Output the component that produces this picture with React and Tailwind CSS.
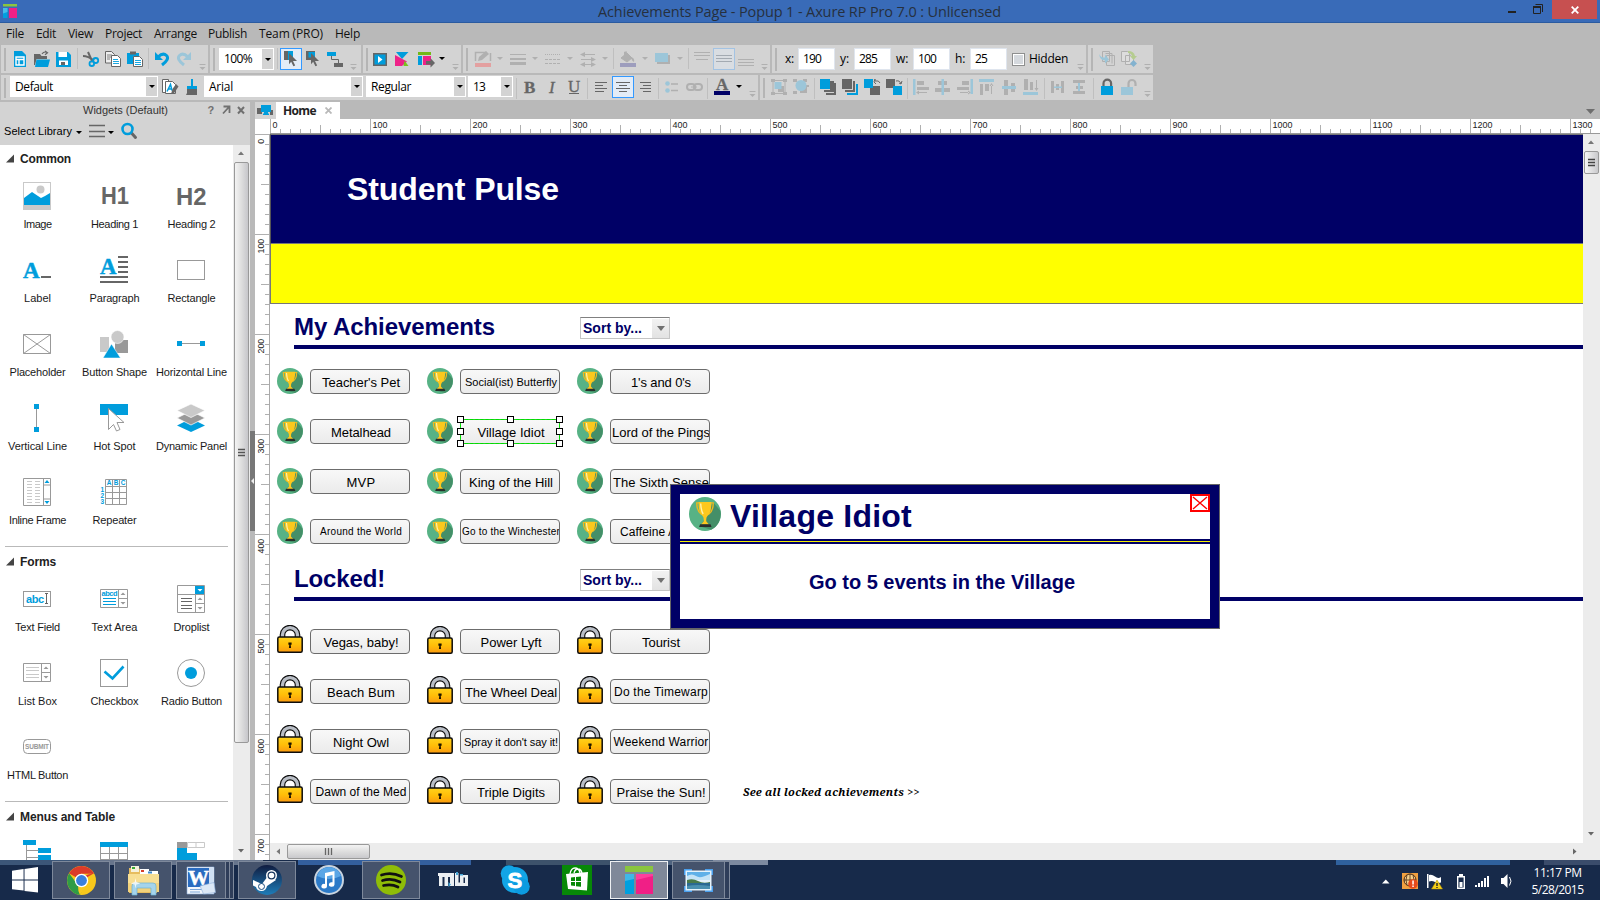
import React, { useLayoutEffect, useRef } from "react";

const BLUE = "#009ddc";
const GRAY = "#666666";
const FBLUE = "#9cc6d9";
const FGRAY = "#b0b0b0";

/* Text whose tracking is adjusted so that it spans a given width. */
function Fit({ w, className = "", children }) {
  const ref = useRef(null);
  useLayoutEffect(() => {
    const el = ref.current;
    el.style.letterSpacing = "0px";
    const width = el.getBoundingClientRect().width;
    el.style.letterSpacing = (w - width) / Math.max(1, el.textContent.length) + "px";
  }, [w]);
  return (
    <span ref={ref} className={"inline-block whitespace-pre " + className}>
      {children}
    </span>
  );
}

/* ---------- toolbars ---------- */
function Strip({ x, w, row, children }) {
  const y = row === 1 ? 45 : 75;
  const h = row === 1 ? 28 : 25;
  return (
    <svg className="block shrink-0" width={w} height={h} viewBox={`${x} ${y} ${w} ${h}`}>
      {children}
    </svg>
  );
}
const Grip = ({ x, row }) => <rect x={x} y={row === 1 ? 48 : 78} width="2" height={row === 1 ? 23 : 20} fill="#b5b5b5" />;
const Sep = ({ x, row }) => <rect x={x} y={row === 1 ? 48 : 78} width="1" height="21" fill="#bfbfbf" />;
const Over = ({ x, row }) => {
  const y = row === 1 ? 64 : 91;
  return (
    <g fill="#b0b0b0">
      <rect x={x} y={y} width="6" height="1" />
      <path d={`M${x} ${y + 3}h6l-3 3z`} />
    </g>
  );
};
const Drop = ({ x, y, c = "#000" }) => <path d={`M${x} ${y}h6l-3 3z`} fill={c} />;
const Sel = ({ x, y, w = 21, faded }) => (
  <rect x={x + 0.5} y={y + 0.5} width={w} height="21" fill={faded ? "#d9dde2" : "#e3ecf7"} stroke={faded ? "#a3c3e3" : "#3399ff"} />
);
const Cursor = ({ x, y }) => <path d={`M${x} ${y}l8 8h-4l2.2 4.4-1.8.9-2.2-4.5-2.2 2.4z`} fill={GRAY} />;
const Field = ({ className, w, children }) => (
  <div className={"flex shrink-0 items-center border border-[#dfe5ee] bg-white text-[12px] leading-none text-black " + className}>
    <Fit w={w}>{children}</Fit>
  </div>
);
const Combo = ({ className, w, children }) => (
  <div className={"flex shrink-0 items-stretch justify-between bg-white " + className}>
    <div className="flex items-center text-[12px] leading-none text-black">
      <Fit w={w}>{children}</Fit>
    </div>
    <div className="my-px mr-px flex w-[11px] items-center justify-center bg-[#d3d3d3]">
      <svg width="6" height="3" viewBox="0 0 6 3"><path d="M0 0h6l-3 3z" /></svg>
    </div>
  </div>
);

function ToolbarRow1() {
  return (
    <div className="flex h-[28px] gap-[2px] pl-px">
      <div className="flex bg-[#d3d3d3]">
        <Strip x={1} w={207} row={1}>
          <Grip x={4} row={1} />
          <path d="M14 51h8l4 4v12h-12z" fill={BLUE} />
          <path d="M16 57h8v8h-8zM16 59.5h8M19 59.5v5.5" fill="none" stroke="#fff" strokeWidth="1.4" />
          <path d="M34 54h6l1.5 2H47v3H36.500l-1.500 6H34z" fill={GRAY} />
          <path d="M36.500 59.500H50L48 67H35z" fill={BLUE} />
          <path d="M42 54q2-3 5-1.500M45 51l2.500 1.800-2.500 2" fill="none" stroke={GRAY} strokeWidth="1.200" />
          <path d="M56 52h12l3 3v12H56z" fill={BLUE} />
          <path d="M58.500 52h8.500v5h-8.500zM59 60.500h9V65h-9z" fill="#fff" />
          <rect x="61" y="62" width="4" height="3" fill={GRAY} />
          <Sep x={77} row={1} />
          <path d="M83 56q5 0 11 4.500M88 52l4.500 10" stroke={GRAY} strokeWidth="2" fill="none" />
          <circle cx="95.700" cy="60.500" r="2.500" fill="none" stroke={BLUE} strokeWidth="1.800" />
          <circle cx="91.800" cy="63.700" r="2.300" fill="none" stroke={BLUE} strokeWidth="1.800" />
          <path d="M105.500 51.500h6l3 3v8.500h-9z" fill="#eee" stroke={GRAY} />
          <path d="M107 55h5M107 57h5M107 59h3" stroke={GRAY} strokeWidth=".8" />
          <path d="M111.500 55.500h6l3 3v8h-9z" fill="#fff" stroke={GRAY} />
          <path d="M113 59.500h5M113 61.500h6M113 63.500h6" stroke={BLUE} strokeWidth=".9" />
          <path d="M127 53h12v11h-12z" fill={BLUE} />
          <path d="M130 51.500h6v3h-6z" fill={GRAY} />
          <path d="M133.500 56.500h6l3 3v7h-9z" fill="#fff" stroke={GRAY} />
          <path d="M135 60.500h6M135 62.500h6M135 64.500h6" stroke={BLUE} strokeWidth=".9" />
          <Sep x={148} row={1} />
          <path d="M158 57q5-5 8.500-1.500t-4.500 9.500" fill="none" stroke={BLUE} strokeWidth="3" />
          <path d="M155 52v8h8z" fill={BLUE} />
          <path d="M188 57q-5-5-8.500-1.500t4.500 9.500" fill="none" stroke={FBLUE} strokeWidth="3" />
          <path d="M191 52v8h-8z" fill={FBLUE} />
          <Over x={199.500} row={1} />
        </Strip>
      </div>
      <div className="flex bg-[#d3d3d3]">
        <Strip x={210} w={9} row={1}><Grip x={213} row={1} /></Strip>
        <Combo className="my-[3px] w-[55px] pl-[5px]" w={28}>100%</Combo>
        <Strip x={274} w={87} row={1}>
          <Sep x={277} row={1} />
          <Sel x={280} y={48} />
          <path d="M284 51h9v9h-9z" fill={BLUE} /><path d="M284 51h4v9h-4z" fill={GRAY} />
          <Cursor x={289} y={53} />
          <path d="M306 51h9v9h-9z" fill={GRAY} /><path d="M308.500 52h6.500v5.500h-6.500z" fill={BLUE} />
          <Cursor x={311} y={53} />
          <path d="M327 52h9v4h-9z" fill={BLUE} /><path d="M334 63h9v4h-9z" fill={GRAY} />
          <path d="M331.500 56v3.500h7V63" fill="none" stroke={GRAY} />
          <Over x={350.500} row={1} />
        </Strip>
      </div>
      <div className="flex bg-[#d3d3d3]">
        <Strip x={363} w={98} row={1}>
          <Grip x={366} row={1} />
          <path d="M373 53h14v13h-14z" fill={GRAY} /><path d="M374.500 54.500h11v10h-11z" fill={BLUE} />
          <path d="M378 56v7l4.500-3.500z" fill="#fff" />
          <path d="M396 52h12.500l-6.500 7z" fill={BLUE} />
          <path d="M395 55v11h7l5-4.500z" fill="#ee2288" />
          <path d="M404.500 60.500l4 5.500h-5z" fill="#7ac21e" />
          <path d="M418 52h13v3h-13z" fill="#73b818" /><path d="M418 56h4v9h-4z" fill={BLUE} />
          <path d="M423 56h8v9h-8z" fill="#ee2288" />
          <path d="M426 61h4.500v-2.800L435 63l-4.500 4.500v-3H426z" fill={GRAY} />
          <Drop x={439} y={57} />
          <Over x={452.500} row={1} />
        </Strip>
      </div>
      <div className="flex bg-[#d3d3d3]">
        <Strip x={463} w={307} row={1}>
          <Grip x={466} row={1} />
          <path d="M475.500 61V52.500h11M490.500 53v8" fill="none" stroke={FGRAY} strokeWidth="1.500" />
          <path d="M478 61l1-4 7-6 3 3-7 6z" fill={FGRAY} />
          <rect x="475" y="63" width="16" height="4" fill="#e3a0a0" />
          <Drop x={497} y={57} c={FGRAY} />
          <path d="M510 54h16v1h-16zM510 58h16v2h-16zM510 62h16v3h-16z" fill={FGRAY} />
          <Drop x={532} y={57} c={FGRAY} />
          <path d="M545 54.500h16" stroke={FGRAY} strokeDasharray="1 1" /><path d="M545 59.500h16M545 63.500h16" stroke={FGRAY} strokeDasharray="3 1" />
          <Drop x={567} y={57} c={FGRAY} />
          <path d="M582 54.500h13M581 59.500h13M582 64.500h13" stroke={FGRAY} />
          <path d="M585 52v5l-5-2.500zM591 57v5l5-2.500zM585 62v5l-5-2.500zM591 62v5l5-2.500z" fill={FGRAY} />
          <Drop x={602} y={57} c={FGRAY} />
          <Sep x={613} row={1} />
          <path d="M621 58l6-5 5 5-5 4zM624.500 56v-4h2.500" fill={FGRAY} stroke={FGRAY} />
          <path d="M631 57q4 1 3 5-2.500-1-3-5" fill={FGRAY} />
          <rect x="620" y="63" width="16" height="4" fill="#9d9dbd" />
          <Drop x={642} y={57} c={FGRAY} />
          <rect x="657" y="55" width="13" height="9" fill={FGRAY} /><rect x="655" y="53" width="13" height="9" fill={FBLUE} />
          <Drop x={677} y={57} c={FGRAY} />
          <Sep x={688} row={1} />
          <path d="M694 52.500h16M694 55.500h16M696 59.500h12" stroke={FGRAY} />
          <Sel x={713} y={48} faded />
          <path d="M716 55.500h16M716 58.500h16M716 61.500h16" stroke="#a3aab2" />
          <path d="M738 59.500h16M738 62.500h16M738 65.500h16" stroke={FGRAY} />
          <Over x={761.500} row={1} />
        </Strip>
      </div>
      <div className="flex items-center bg-[#d3d3d3] text-[12px] leading-none text-black">
        <Strip x={772} w={6} row={1}><Grip x={775} row={1} /></Strip>
        <span className="w-[20px] pl-[7px]"><Fit w={9}>x:</Fit></span>
        <Field className="h-[22px] w-[37px] pl-[4px]" w={18}>190</Field>
        <span className="w-[19px] pl-[5px]">y:</span>
        <Field className="h-[22px] w-[37px] pl-[4px]" w={18}>285</Field>
        <span className="w-[22px] pl-[5px]">w:</span>
        <Field className="h-[22px] w-[37px] pl-[4px]" w={18}>100</Field>
        <span className="w-[20px] pl-[5px]">h:</span>
        <Field className="h-[22px] w-[37px] pl-[4px]" w={12}>25</Field>
        <div className="ml-[5px] mr-[4px] h-[13px] w-[13px] border border-[#8e8f8f] bg-[#d5d9de] outline outline-1 -outline-offset-2 outline-white" />
        <Fit w={39}>Hidden</Fit>
        <Strip x={1068} w={18} row={1}><Over x={1077.500} row={1} /></Strip>
      </div>
      <div className="flex bg-[#d3d3d3]">
        <Strip x={1088} w={65} row={1}>
          <Grip x={1091} row={1} />
          <path d="M1102.500 51.500h7v10h-7zM1105.500 53.500h6.500v10M1106.500 55.500h8v10h-8z" fill="#d3d3d3" stroke={FGRAY} />
          <path d="M1099 54q2 4 6 3.500v-3l4 5-4 4v-3q-5 0-6-6.500z" fill={FBLUE} />
          <path d="M1121.500 51.500h6l2 2v8h-8zM1125.500 55.500h5l3 3v6h-8z" fill="#ddd" stroke={FGRAY} />
          <path d="M1128 51q6 0 7 5h2l-3.500 4-3.500-4h2q-1-3-4-3z" fill="#b5cc8f" />
          <path d="M1133.500 60l3.500 3.500-3.500 3.500-3.500-3.500z" fill="#83b2cf" />
          <Over x={1144.500} row={1} />
        </Strip>
      </div>
    </div>
  );
}

function ToolbarRow2() {
  return (
    <div className="mt-[2px] flex h-[25px] gap-[2px] pl-px">
      <div className="flex bg-[#d3d3d3]">
        <Strip x={1} w={9} row={2}><Grip x={4} row={2} /></Strip>
        <Combo className="mb-[3px] mt-px w-[148px] pl-[5px]" w={38}>Default</Combo>
        <Strip x={158} w={46} row={2}>
          <path d="M162.500 79.500h6v13h-6z" fill="#fff" stroke={GRAY} />
          <path d="M165.500 81.500h7l3 3v9h-10z" fill="#fff" stroke={GRAY} />
          <path d="M167 91.500l3.500-7 1.500 6M168 89h3" fill="none" stroke={BLUE} strokeWidth="1.500" />
          <path d="M171 94l1.500-5 3.500-5 2.500 2.500-5 7.500z" fill={GRAY} />
          <path d="M191 79h2v7h-2z" fill={BLUE} /><path d="M187 86h10v3h-10z" fill={BLUE} />
          <path d="M187 89h10v6h-11q1.500-2 1-6z" fill={GRAY} />
        </Strip>
        <Combo className="mb-[3px] mt-px w-[159px] pl-[5px]" w={24}>Arial</Combo>
        <div className="w-[3px]" />
        <Combo className="mb-[3px] mt-px w-[100px] pl-[5px]" w={40}>Regular</Combo>
        <div className="w-[2px]" />
        <Combo className="mb-[3px] mt-px w-[45px] pl-[5px]" w={12}>13</Combo>
        <Strip x={513} w={245} row={2}>
          <Sep x={516} row={2} />
          <g fill={GRAY} stroke={GRAY} strokeWidth=".3" fontFamily="Liberation Serif, serif" fontSize="17">
            <text x="524" y="92.500" fontWeight="bold">B</text>
            <text x="549" y="92.500" fontStyle="italic">I</text>
            <text x="568" y="91.500">U</text>
            <text x="716" y="90" fontWeight="bold">A</text>
          </g>
          <rect x="569" y="93" width="10" height="1" fill={GRAY} />
          <Sep x={587} row={2} />
          <path d="M595 82.500h12M595 85.500h8M595 88.500h12M595 91.500h9" stroke={GRAY} />
          <Sel x={612} y={76} />
          <path d="M616 82.500h14M619 85.500h8M616 88.500h14M619 91.500h8" stroke={GRAY} />
          <path d="M640 82.500h11M643 85.500h8M640 88.500h11M643 91.500h8" stroke={GRAY} />
          <Sep x={658} row={2} />
          <circle cx="667.500" cy="83.500" r="2.300" fill={FBLUE} /><circle cx="667.500" cy="90.500" r="2.300" fill={FBLUE} />
          <path d="M671 84h7M671 90.500h7" stroke={FGRAY} strokeWidth="1.500" />
          <rect x="687" y="84" width="8" height="6" rx="3" fill="none" stroke={FGRAY} strokeWidth="2" />
          <rect x="694" y="84" width="8" height="6" rx="3" fill="none" stroke={FGRAY} strokeWidth="2" />
          <path d="M691 87h6" stroke={FGRAY} />
          <Sep x={707} row={2} />
          <rect x="714" y="91" width="16" height="4" fill="#000066" />
          <Drop x={736} y={85} />
          <Over x={749.500} row={2} />
        </Strip>
      </div>
      <div className="flex bg-[#d3d3d3]">
        <Strip x={760} w={393} row={2}>
          <Grip x={763} row={2} />
          <path d="M773 80.500h12v13h-12z" fill="none" stroke={FGRAY} />
          <path d="M771 79h4v3h-4zM783 79h4v3h-4zM771 92h4v3h-4zM783 92h4v3h-4z" fill={FGRAY} />
          <path d="M778 86h6v6h-6z" fill={FGRAY} /><path d="M774.500 82h7v7h-7z" fill={FBLUE} />
          <path d="M793 79h4v3h-4zM803 79h4v3h-4zM793 91h4v3h-4zM804 85h5v2h-2v6h-7v-3z" fill={FGRAY} />
          <circle cx="801" cy="85.500" r="5.500" fill={FBLUE} />
          <Sep x={814} row={2} />
          <path d="M833 83h3v12h-10v-2h8zM830 81h4v11h-10v-2h6z" fill={GRAY} /><path d="M820 79h10v10h-10z" fill={BLUE} />
          <path d="M856 84h2v11h-11v-2h9z" fill={BLUE} /><path d="M842 79h10v10h-10zM853 81h2v11h-10v-2h8z" fill={GRAY} />
          <path d="M870 86h10v9h-10z" fill={GRAY} /><path d="M864 79h9v9h-9z" fill={BLUE} /><path d="M880 83q-1-3-5-2v-2l-1 3 2 2" stroke={GRAY} fill="none" />
          <path d="M886 79h9v9h-9z" fill={GRAY} /><path d="M893 86h9v9h-9z" fill={BLUE} /><path d="M896 81q4-1 5 3M899 83l2 1 1-3" stroke={GRAY} fill="none" />
          <Sep x={907} row={2} />
          <g fill={FGRAY}>
            <path d="M917 81h7v4h-7zM917 87h12v3h-12zM917 92h10v1h-10zM919 90.500v4l-3-2z" />
            <path d="M938 81h9v4h-9zM935 88h15v4h-15z" />
            <path d="M962 81h7v4h-7zM957 87h12v3h-12zM960 92h9v1h-9zM968 90.500v4l3-2z" />
            <path d="M980 84h3v11h-3zM985 84h4v7h-4zM991 85h1v9h-1zM989.500 86h4l-2-3z" />
            <path d="M1004 80h4v15h-4zM1011 83h4v9h-4z" />
            <path d="M1024 79h4v11h-4zM1030 82h3v8h-3zM1036 80h1v9h-1zM1034.500 88h4l-2 3z" />
            <path d="M1051 81h3v12h-3zM1061 81h3v12h-3zM1056 84h3v6h-3z" />
            <path d="M1073 80h12v3h-12zM1073 91h12v3h-12zM1076 86h7v3h-7z" />
          </g>
          <g fill={FBLUE}>
            <path d="M913 79h2.500v16h-2.500zM941.500 79h2.500v16h-2.500zM970.500 79h2.500v15h-2.500zM979 79h15v3h-15zM1002 86h14v3h-14zM1023 92h15v3h-15zM1054 86.500h8v1.500h-8zM1078 83h2v8h-2z" />
          </g>
          <Sep x={1044} row={2} />
          <Sep x={1093} row={2} />
          <path d="M1103.500 87v-3.500a3.800 3.800 0 017.600 0V87" fill="none" stroke={GRAY} strokeWidth="2.200" />
          <path d="M1101 86h12v9h-12z" fill={BLUE} />
          <path d="M1128.500 87v-3.500a3.500 3.500 0 017 0V86" fill="none" stroke={FGRAY} strokeWidth="2.200" />
          <path d="M1121 87h12v8h-12z" fill={FBLUE} />
          <Over x={1144.500} row={2} />
        </Strip>
      </div>
    </div>
  );
}

/* ---------- widget library ---------- */
const LG = "#c9c9c9";
const MG = "#999999";
const icons = {
  image: <><rect x=".5" y=".5" width="27" height="27" fill="#fff" stroke={LG} /><rect y="23" width="28" height="5" fill={LG} /><circle cx="17.500" cy="7.500" r="4" fill={LG} /><path d="M1 16l8-6 9 6 4-2 5-3v12H1z" fill={BLUE} /></>,
  h1: <text x="1" y="21.500" fontSize="23" fontWeight="bold" fill={GRAY} textLength="28" lengthAdjust="spacingAndGlyphs" fontFamily="Liberation Sans, sans-serif">H1</text>,
  h2: <text x="-1" y="22.500" fontSize="23" fontWeight="bold" fill={GRAY} textLength="30.500" lengthAdjust="spacingAndGlyphs" fontFamily="Liberation Sans, sans-serif">H2</text>,
  label: <><text x="0" y="21.500" fontSize="23" fontWeight="bold" fill={BLUE} stroke={BLUE} strokeWidth=".5" fontFamily="Liberation Serif, serif">A</text><rect x="18" y="20" width="10" height="2" fill={GRAY} /></>,
  paragraph: <><text x="0" y="17.500" fontSize="24" fontWeight="bold" fill={BLUE} stroke={BLUE} strokeWidth=".5" textLength="16.500" lengthAdjust="spacingAndGlyphs" fontFamily="Liberation Serif, serif">A</text><path d="M18 1h10M18 6h10M18 11h10M18 16h10M0 21h28M0 26h28" stroke={GRAY} strokeWidth="2" /></>,
  rectangle: <rect x=".5" y="4.500" width="27" height="19" fill="#fff" stroke={MG} />,
  placeholder: <path d="M.5 4.500h27v19H.5zM.5 4.500l27 19M27.500 4.500l-27 19" fill="none" stroke={MG} />,
  shape: <><rect y="7" width="9" height="15" fill={LG} /><rect x="15" y="10" width="13" height="13" fill={MG} /><circle cx="17.500" cy="7" r="6.500" fill={LG} stroke="#fff" strokeWidth=".6" /><path d="M3 28l8.500-14L20.500 28z" fill={BLUE} stroke="#fff" strokeWidth=".5" /></>,
  hline: <><path d="M2 13.500h24" stroke={MG} /><path d="M0 11h5v5H0zM23 11h5v5h-5z" fill={BLUE} /></>,
  vline: <><path d="M13.500 2v24" stroke={MG} /><path d="M11 0h5v5h-5zM11 23h5v5h-5z" fill={BLUE} /></>,
  hotspot: <><rect width="28" height="11" fill={BLUE} /><path d="M8.500 4.500L24 18.500h-7l3 7-3.500 1.500-3-6.500-5 5z" fill="#fff" stroke={MG} /></>,
  dynamic: <><path d="M14 14.500l14 7-14 6.500-14-6.500z" fill={BLUE} /><path d="M14 7l14 7-14 7-14-7z" fill={MG} stroke="#fff" strokeWidth=".7" /><path d="M14 0l14 6.500-14 7-14-7z" fill={LG} stroke="#fff" strokeWidth=".7" /></>,
  iframe: <><path d="M.5.5h27v27H.5zM20.500.5v27M20.500 7h7M20.500 21h7" fill="#fff" stroke={MG} /><path d="M4 3.500h5M4 6.500h5M4 9.500h5M4 12.500h5M4 15.500h5M4 18.500h5M4 21.500h5M4 24.500h5M12 3.500h5M12 6.500h5M12 9.500h5M12 12.500h5M12 15.500h5M12 18.500h5M12 21.500h5M12 24.500h5" stroke={LG} /><path d="M21.500 5h5L24 2zM21.500 23h5L24 26z" fill={BLUE} /></>,
  repeater: <><path d="M5.500 1.500h21v25h-21zM5.500 8.500h21M5.500 14.500h21M5.500 20.500h21M12.500 8v18M19.500 8v18M12.500 2v6M19.500 2v6" fill="none" stroke={MG} /><g fill={BLUE} fontSize="6.500" fontWeight="bold" fontFamily="Liberation Sans, sans-serif"><text x="6.800" y="7.300">A</text><text x="13.800" y="7.300">B</text><text x="20.800" y="7.300">C</text><text x="0.500" y="13.500">1</text><text x="0.500" y="19.800">2</text><text x="0.500" y="26">3</text></g></>,
  textfield: <><rect x=".5" y="6.500" width="27" height="15" fill="#fff" stroke={MG} /><text x="3" y="18" fontSize="11" fontWeight="bold" fill={BLUE} textLength="18" fontFamily="Liberation Sans, sans-serif">abc</text><path d="M22 8.500h3M23.500 8.500v10M22 18.500h3" stroke={GRAY} /></>,
  textarea: <><path d="M.5 4.500h27v18H.5zM18.500 4.500v18M18.500 13.500h9" fill="#fff" stroke={MG} /><text x="1.500" y="11" fontSize="7.500" fontWeight="bold" fill={BLUE} textLength="16" fontFamily="Liberation Sans, sans-serif">abcd</text><path d="M3 13.500h13M3 16.500h13M3 19.500h13" stroke={BLUE} /><path d="M20.500 10h5L23 7.500zM20.500 17h5L23 19.500z" fill={MG} /></>,
  droplist: <><path d="M.5.500h27v27H.5zM.5 9.500h27M18.500 9v18M18.500 18.500h9" fill="#fff" stroke={MG} /><rect x="18" y="1" width="9" height="8" fill={BLUE} /><path d="M20.500 4h5L23 6.500z" fill="#fff" /><path d="M4 13.500h11M4 16.500h11M4 20.500h11M4 23.500h11" stroke={GRAY} /><path d="M20.500 15h5L23 12.500zM20.500 22h5L23 24.500z" fill={MG} /></>,
  listbox: <><path d="M.5 4.500h27v18H.5zM18.500 4.500v18M18.500 13.500h9" fill="#fff" stroke={MG} /><path d="M3 8.500h13M3 11.500h13M3 15.500h13M3 18.500h13" stroke={LG} /><path d="M20.500 10h5L23 7.500zM20.500 17h5L23 19.500z" fill={MG} /></>,
  checkbox: <><rect x=".5" y=".5" width="27" height="27" fill="#fff" stroke={MG} /><path d="M4.500 12.500l8 7L23.500 7.500" fill="none" stroke={BLUE} strokeWidth="2.600" /></>,
  radio: <><circle cx="14" cy="14" r="13.500" fill="#fff" stroke={MG} /><circle cx="14" cy="14" r="6" fill={BLUE} /></>,
  submit: <><rect x=".5" y="6.500" width="27" height="14" rx="4" fill="#fff" stroke={MG} /><text x="2" y="16" fontSize="6.500" fontWeight="bold" fill={MG} textLength="24" fontFamily="Liberation Sans, sans-serif">SUBMIT</text></>,
  tree: <><path d="M0 0h13v5H0zM15 8h13v5H15zM15 15h13v5H15z" fill={BLUE} /><path d="M3.500 5v15M3.500 10.500h12M3.500 17.500h12" stroke={MG} fill="none" /></>,
  table: <><path d="M.5 7v13M27.500 7v13M9.500 7v13M18.500 7v13M0 13.500h28M0 19.500h28" stroke={MG} /><rect y="2" width="28" height="5" fill={BLUE} /></>,
  menu: <><path d="M10.500 2.500h17v5h-17zM19 2v5" fill="none" stroke={LG} /><rect y="2" width="10" height="6" fill={MG} /><path d="M0 8h10v5h10v7H0z" fill={BLUE} /></>,
};

function Section({ title, w, items }) {
  return (
    <div>
      <div className="flex h-[27px] items-center pl-[6px] text-[12px] font-bold text-[#222]">
        <svg width="14" height="9" viewBox="0 0 14 9"><path d="M0 8.500L8 .5v8z" fill="#444" /></svg>
        <Fit w={w}>{title}</Fit>
      </div>
      <div className="-ml-[2px] grid grid-cols-[77px_77px_77px] pt-[10px]">
        {items.map(([icon, name, tw]) => (
          <div key={icon} className="flex h-[74px] flex-col items-center">
            <svg className="block overflow-visible" width="28" height="28" viewBox="0 0 28 28">{icons[icon]}</svg>
            {name && (
              <div className="ml-[2px] mt-[6px] flex h-[16px] items-center justify-center whitespace-nowrap text-[11px] leading-none text-[#1a1a1a]">
                <Fit w={tw}>{name}</Fit>
              </div>
            )}
          </div>
        ))}
      </div>
    </div>
  );
}

function WidgetPanel() {
  return (
    <div className="flex w-[250px] shrink-0 flex-col bg-[#d3d3d3] font-['Liberation_Sans',Arial,sans-serif]">
      <div className="flex h-[16px] items-center pl-[83px] text-[11px] text-[#333]">
        <Fit w={85}>Widgets (Default)</Fit>
        <svg className="ml-[38px]" width="40" height="12" viewBox="206 104 40 12">
          <text x="207.500" y="114" fontSize="11" fontWeight="bold" fill="#707070">?</text>
          <path d="M223 113.500l5.500-6M223.500 106.500h6v6.500" stroke="#707070" strokeWidth="1.800" fill="none" />
          <path d="M238 107l6 6.500M244 107l-6 6.500" stroke="#707070" strokeWidth="2" />
        </svg>
      </div>
      <div className="flex h-[27px] items-center pb-px pl-[4px] text-[11px] text-black">
        <Fit w={68}>Select Library</Fit>
        <svg className="ml-[3px]" width="64" height="20" viewBox="75 122 64 20">
          <path d="M76 132h6l-3 3zM108 132h6l-3 3z" />
          <path d="M89 126.500h16M89 132.500h16M89 137.500h16" stroke={GRAY} strokeWidth="1.600" />
          <path d="M131.500 134l4 4.500" stroke={GRAY} strokeWidth="3" strokeLinecap="round" />
          <circle cx="127.500" cy="130" r="5" fill="none" stroke={BLUE} strokeWidth="2.600" />
        </svg>
      </div>
      <div className="flex h-[715px]">
        <div className="w-[233px] overflow-hidden bg-white">
          <Section title="Common" w={51} items={[
            ["image", "Image", 28], ["h1", "Heading 1", 47], ["h2", "Heading 2", 48],
            ["label", "Label", 27], ["paragraph", "Paragraph", 50], ["rectangle", "Rectangle", 48],
            ["placeholder", "Placeholder", 56], ["shape", "Button Shape", 65], ["hline", "Horizontal Line", 71],
            ["vline", "Vertical Line", 59], ["hotspot", "Hot Spot", 42], ["dynamic", "Dynamic Panel", 71],
            ["iframe", "Inline Frame", 57], ["repeater", "Repeater", 44]]} />
          <div className="mb-px ml-[5px] mr-[5px] mt-[-6px] h-px bg-[#b9b9b9]" />
          <Section title="Forms" w={36} items={[
            ["textfield", "Text Field", 45], ["textarea", "Text Area", 46], ["droplist", "Droplist", 36],
            ["listbox", "List Box", 39], ["checkbox", "Checkbox", 48], ["radio", "Radio Button", 61],
            ["submit", "HTML Button", 61]]} />
          <div className="mb-px ml-[5px] mr-[5px] mt-[-6px] h-px bg-[#b9b9b9]" />
          <Section title="Menus and Table" w={95} items={[["tree"], ["table"], ["menu"]]} />
        </div>
        <div className="flex w-[17px] flex-col items-center bg-[#ececec]">
          <svg width="17" height="17" viewBox="0 0 17 17"><path d="M5 10h6L8 6.500z" fill="#777" /></svg>
          <div className="flex h-[581px] w-[15px] items-center justify-center rounded-[2px] border border-[#999] bg-linear-to-r from-[#f3f3f3] via-[#dedede] to-[#c6c6ca]">
            <svg width="8" height="10" viewBox="0 0 8 10"><path d="M0 1.500h7M0 4.500h7M0 7.500h7" stroke="#555" strokeWidth="1.300" /></svg>
          </div>
          <svg className="mt-auto" width="17" height="17" viewBox="0 0 17 17"><path d="M5 6h6l-3 3.500z" fill="#666" /></svg>
        </div>
      </div>
    </div>
  );
}

/* ---------- rulers ---------- */
const ticks = Array.from({ length: 134 }, (_, i) => i * 10);
function HRuler() {
  return (
    <svg className="block h-[15px] w-[1330px] shrink-0" viewBox="270 119 1330 15">
      <rect x="270" y="119" width="1330" height="15" fill="#fff" />
      {ticks.filter((v) => v <= 1320).map((v) => {
        const top = v % 100 === 0 ? 119 : v % 50 === 0 ? 125 : 129;
        return <rect key={v} x={270 + v} y={top} width="1" height={133 - top} fill="#b0b0b0" />;
      })}
      <g fontSize="9.500" fill="#222" fontFamily="Liberation Sans, sans-serif">
        {ticks.filter((v) => v % 100 === 0).map((v) => (
          <text key={v} x={272.5 + v} y="128" textLength={String(v).length * 5} lengthAdjust="spacingAndGlyphs">{v}</text>
        ))}
      </g>
      <rect x="270" y="133" width="1330" height="1" fill="#999" />
    </svg>
  );
}
function VRuler() {
  return (
    <svg className="block h-[726px] w-[15px] shrink-0" viewBox="255 134 15 726">
      <rect x="255" y="134" width="15" height="726" fill="#fff" />
      {ticks.filter((v) => v <= 720).map((v) => {
        const left = v % 100 === 0 ? 255 : v % 50 === 0 ? 261 : 265;
        return <rect key={v} x={left} y={134 + v} width={269 - left} height="1" fill="#b0b0b0" />;
      })}
      <g fontSize="9.500" fill="#222" fontFamily="Liberation Sans, sans-serif">
        {ticks.filter((v) => v % 100 === 0 && v <= 700).map((v) => {
          const len = String(v).length * 4.9;
          return <text key={v} transform={`translate(264.300 ${138.8 + v + len}) rotate(-90)`} textLength={len} lengthAdjust="spacingAndGlyphs">{v}</text>;
        })}
      </g>
      <rect x="269" y="134" width="1" height="726" fill="#aaa" />
    </svg>
  );
}

/* ---------- design canvas ---------- */
function Trophy({ className }) {
  return (
    <svg className={className} viewBox="0 0 26 26" preserveAspectRatio="none">
      <circle cx="13" cy="13" r="13" fill="#57b285" />
      <path d="M19.500 4L25.500 10.500A13 13 0 0118 25L9 22.500l4-6z" fill="#448f68" />
      <path d="M8 4.500H6.300q0 6.500 4 9M18 4.500h1.700q0 6.500-4 9" fill="none" stroke="#f0b91e" strokeWidth="1.100" />
      <path d="M7.800 3.800h10.400q.2 8-3.200 10.700-1.200 1-1 4l2.200 2.500h-6.400l2.200-2.500q.2-3-1-4Q7.600 11.800 7.800 3.800z" fill="#fcc81e" />
      <path d="M9.500 5q.3 5.500 2 8" fill="none" stroke="#fff3b0" strokeWidth="1.100" />
      <path d="M9 20.800h8.500l.8 2.200H8.200z" fill="#2a2f2c" />
    </svg>
  );
}
function Lock({ className }) {
  return (
    <svg className={className} viewBox="0 0 26 28">
      <path d="M5.500 14V9.800a7.500 7.200 0 0115 0V14" fill="none" stroke="#0c0c0c" strokeWidth="5.600" />
      <path d="M5.500 14V9.800a7.500 7.200 0 0115 0V14" fill="none" stroke="#b9bec6" strokeWidth="3.400" />
      <rect x=".8" y="12" width="24.400" height="15.200" rx="1.500" fill="url(#gold)" stroke="#0c0c0c" strokeWidth="1.500" />
      <path d="M11.400 17.500h3.200v2.200h-.9l.4 3.300h-2.200l.4-3.300h-.9z" fill="#1a1200" />
    </svg>
  );
}

const pill = "flex h-[25px] w-[100px] items-center justify-center overflow-hidden rounded-[4px] border border-[#6c6c6c] bg-linear-to-b from-[#f8f8f8] to-[#ebebeb] leading-none text-black whitespace-nowrap";
const sizes = { 13: "text-[13px] pt-[2px] pl-[2px]", 12: "text-[12px] pl-[2px]", 11: "text-[11px] pt-[2px] pl-[2px]", 10: "text-[10px] pt-px pl-[2px]" };
const mine = [
  ["Teacher's Pet", 13, 78], ["Social(ist) Butterfly", 11, 92], ["1's and 0's", 13, 60],
  ["Metalhead", 13, 60], ["Village Idiot", 13, 67], ["Lord of the Pings", 13, 98],
  ["MVP", 13, 29], ["King of the Hill", 13, 84], ["The Sixth Sense", 13, 96],
  ["Around the World", 10, 82], ["Go to the Winchester", 10, 98], ["Caffeine Addict", 12, 82],
];
const locked = [
  ["Vegas, baby!", 13, 75], ["Power Lyft", 13, 61], ["Tourist", 13, 38],
  ["Beach Bum", 13, 68], ["The Wheel Deal", 13, 92], ["Do the Timewarp", 12, 94],
  ["Night Owl", 13, 56], ["Spray it don't say it!", 11, 94], ["Weekend Warrior", 12, 95],
  ["Dawn of the Med", 12, 91], ["Triple Digits", 13, 68], ["Praise the Sun!", 13, 89],
];

function Grid({ items, Icon, iconClass, shifted }) {
  return (
    <div className="grid grid-cols-[150px_150px_150px] gap-y-[25px]">
      {items.map(([t, s, w], i) => (
        <div key={t} className="flex h-[25px] items-start">
          <Icon className={"mr-[7px] block shrink-0 " + (shifted && i % 3 > 0 ? "h-[28px] w-[26px] -mt-[3px]" : iconClass)} />
          <div className={pill + " " + sizes[s]}><Fit w={w}>{t}</Fit></div>
        </div>
      ))}
    </div>
  );
}
function SortBox({ className }) {
  return (
    <div className={"absolute flex h-[22px] w-[90px] items-center justify-between border border-[#c4c4c4] border-t-[#808080] bg-white pl-[2px] text-[14px] font-bold leading-none text-[#000066] " + className}>
      <Fit w={59}>Sort by...</Fit>
      <span className="flex h-[19px] w-[17px] items-center justify-center bg-linear-to-b from-[#f2f2f2] to-[#e2e2e2]">
        <svg width="8" height="5" viewBox="0 0 8 5"><path d="M0 0h8L4 5z" fill="#707070" /></svg>
      </span>
    </div>
  );
}
const handles = [
  "left-[187px] top-[282px]", "left-[237px] top-[282px]", "left-[286px] top-[282px]",
  "left-[187px] top-[294px]", "left-[286px] top-[294px]",
  "left-[187px] top-[306px]", "left-[237px] top-[306px]", "left-[286px] top-[306px]",
];

function Canvas() {
  return (
    <div className="relative h-[709px] w-[1313px] overflow-hidden bg-white font-['Liberation_Sans',Arial,sans-serif] text-[#000066]">
      <div className="flex h-[110px] items-center border-b border-l border-t border-[#777] border-l-[#555] bg-[#000066] pl-[76px] text-[32px] font-bold leading-none text-white">
        <Fit w={212}>Student Pulse</Fit>
      </div>
      <div className="h-[60px] border-b border-l border-[#777] bg-[#ffff00]" />

      <div className="absolute left-[24px] top-[179px] text-[24px] font-bold leading-[27px]"><Fit w={201}>My Achievements</Fit></div>
      <SortBox className="left-[310px] top-[183px]" />
      <div className="absolute left-[24px] top-[211px] h-[4px] w-[1289px] bg-[#000066]" />
      <div className="absolute left-[7px] top-[235px]"><Grid items={mine} Icon={Trophy} iconClass="h-[26px] w-[26px] -mt-px" /></div>

      <div className="absolute left-[190px] top-[285px] h-[25px] w-[100px] border border-dashed border-[#008a00] outline outline-1 -outline-offset-1 outline-[#00ff00]/70" />
      {handles.map((h) => <div key={h} className={"absolute h-[7px] w-[7px] border border-black bg-white " + h} />)}

      <div className="absolute left-[24px] top-[431px] text-[24px] font-bold leading-[27px]"><Fit w={91}>Locked!</Fit></div>
      <SortBox className="left-[310px] top-[435px]" />
      <div className="absolute left-[24px] top-[463px] h-[4px] w-[1289px] bg-[#000066]" />
      <div className="absolute left-[7px] top-[495px]"><Grid items={locked} Icon={Lock} iconClass="h-[28px] w-[26px] -mt-[4px]" shifted /></div>
      <div className="absolute left-[473px] top-[651px] font-['Noto_Serif','DejaVu_Serif',serif] text-[11px] font-bold italic leading-[14px] text-black"><Fit w={177}>See all locked achievements &gt;&gt;</Fit></div>

      <div className="absolute left-[400px] top-[350px] flex h-[145px] w-[550px] flex-col border border-[#666] bg-[#000066] p-[9px]">
        <div className="flex h-[45px] bg-white">
          <Trophy className="ml-[9px] mt-[3px] block h-[34px] w-[32px]" />
          <div className="ml-[9px] mt-[6px] text-[32px] font-bold leading-[32px]"><Fit w={182}>Village Idiot</Fit></div>
          <svg className="ml-auto block" width="20" height="18" viewBox="0 0 20 18" preserveAspectRatio="none"><path d="M1 1h18v16H1z" fill="#fff" stroke="#f00" strokeWidth="2" /><path d="M3 3l14 12M17 3L3 15" stroke="#f00" strokeWidth="1.400" /></svg>
        </div>
        <div className="h-[5px] border-y-2 border-[#000066] bg-[#f5f000]" />
        <div className="flex flex-1 items-center bg-white pl-[129px] text-[20px] font-bold leading-none"><Fit w={266}>Go to 5 events in the Village</Fit></div>
      </div>
    </div>
  );
}

/* ---------- taskbar ---------- */
const TaskButton = ({ className, children }) => (
  <div className={"flex h-[38px] shrink-0 items-center justify-center " + className}>{children}</div>
);
const open = "border border-[#7e899b] bg-[#45536c]";
const Stack = ({ className }) => <div className={"h-[38px] border border-l-0 border-[#7e899b] bg-[#2f3e5a] " + className} />;

function Taskbar() {
  return (
    <div className="flex h-[40px] shrink-0 flex-col bg-[#172a4a]">
      <div className="flex h-0">
        <div className="h-[5px] w-[90px] bg-[#3c5678]" />
        <div className="h-[5px] w-[173px] bg-[#67758c]" />
        <div className="ml-[35px] h-[5px] w-[173px] bg-[#335f9e]" />
        <div className="ml-[35px] h-[5px] w-[110px] bg-[#3d526b]" />
        <div className="h-[5px] w-[97px] bg-[#4f6480]" />
        <div className="h-[5px] w-[55px] bg-[#7d8aa0]" />
        <div className="ml-[568px] h-[5px] w-[174px] bg-[#2f619e]" />
        <div className="ml-[34px] h-[5px] w-[56px] bg-[#3a4c6b]" />
      </div>
      <div className="relative flex h-[40px] items-start">
        <TaskButton className="mt-px w-[52px] pr-[3px]">
          <svg width="26" height="26" viewBox="0 0 27 27" fill="#fff"><path d="M0 4l12-1.800V13H0zM13 2l14-2v13H13zM0 14h12v10.500L0 23zM13 14h14v12.500L13 25z" /></svg>
        </TaskButton>
        <TaskButton className={"mt-px w-[58px] " + open}>
          <svg width="29" height="29" viewBox="0 0 28 28">
            <circle cx="14" cy="14" r="14" fill="#f7c81c" />
            <path d="M14 14L1.900 7A14 14 0 0126.100 7z" fill="#dc3b2a" />
            <path d="M2 7a14 14 0 0010.500 21l6-11.500L8 15z" fill="#2f9c46" />
            <path d="M14 7.500h12.500A14 14 0 0012.500 28L20 17z" fill="#f8ca20" />
            <circle cx="14" cy="14" r="6.500" fill="#fff" /><circle cx="14" cy="14" r="5.200" fill="#3a80dd" />
          </svg>
        </TaskButton>
        <TaskButton className={"ml-[4px] mt-px w-[58px] " + open}>
          <svg width="33" height="31" viewBox="0 0 33 31">
            <path d="M2 3h10l2 3h16v22H2z" fill="#e7bd5f" /><path d="M4 1h8v6H4z" fill="#f6f1dc" /><path d="M5 2h3v2H5z" fill="#3aa935" />
            <path d="M13 4h9v5h-9z" fill="#fff" /><path d="M14 5h3v2h-3z" fill="#d6402b" /><path d="M20 6h11v4H20z" fill="#fff" /><path d="M21 6.500h4v2h-4z" fill="#3b86c8" />
            <path d="M1 9h31v18H1z" fill="#f8df94" /><path d="M1 18h31v9H1z" fill="#f2d27c" />
            <path d="M5 30V21q0-3 3-3h18q3 0 3 3v9h-5v-7H10v7z" fill="#a5d4ec" stroke="#6fb1d4" strokeWidth=".7" />
            <path d="M8.500 13l.8 4 4 1.500-4 1-.8 4-.8-4-4-1 4-1.500z" fill="#fff" opacity=".8" />
          </svg>
        </TaskButton>
        <TaskButton className={"ml-[4px] mt-px w-[50px] " + open}>
          <svg width="30" height="29" viewBox="0 0 30 29">
            <path d="M1 1h27v27H1z" fill="#f3f7fc" stroke="#8fb0dc" strokeWidth=".6" /><path d="M2 2h21v19H2z" fill="#2a6cc0" /><path d="M23 2h4v15h-4z" fill="#cfe0f4" />
            <text x="2" y="19" fontSize="22" fontWeight="bold" fill="#fff" stroke="#fff" strokeWidth=".5" textLength="21" lengthAdjust="spacingAndGlyphs" fontFamily="Liberation Serif, serif">W</text>
            <path d="M4 23.500h12M4 26h10" stroke="#7da7d9" /><path d="M14 20l14-3.500 1.500 10-12 1.500z" fill="#dce8f6" stroke="#8fb0dc" strokeWidth=".6" />
          </svg>
        </TaskButton>
        <Stack className="mt-px w-[4px]" /><Stack className="mt-px w-[4px]" />
        <TaskButton className={"ml-[4px] mt-px w-[58px] " + open}>
          <svg width="30" height="30" viewBox="0 0 30 30">
            <defs><linearGradient id="steam" x1="0" y1="0" x2="0" y2="1"><stop offset="0" stopColor="#101c40" /><stop offset="1" stopColor="#1f7db8" /></linearGradient></defs>
            <circle cx="15" cy="15" r="15" fill="url(#steam)" />
            <path d="M1 15l9 4 6-8 8 4-9 6q-1 5-5.500 5T4 22l-3-1.500z" fill="#fff" />
            <circle cx="19.500" cy="10.500" r="5.500" fill="#fff" /><circle cx="19.500" cy="10.500" r="3.400" fill="#fff" stroke="#16345c" strokeWidth="1.200" />
            <circle cx="9.500" cy="21.500" r="3" fill="none" stroke="#1c4f80" strokeWidth="1" />
          </svg>
        </TaskButton>
        <TaskButton className="ml-[4px] mt-px w-[58px]">
          <svg width="30" height="30" viewBox="0 0 30 30">
            <circle cx="15" cy="15" r="15" fill="#c8d4e0" /><circle cx="15" cy="15" r="13" fill="#2c7ac8" /><path d="M3 11a12.500 12.500 0 0124 0q-12 6-24 0z" fill="#5aa6e6" />
            <path d="M11 8l9.500-2v13.500a2.800 2.300 0 11-2-2.200V10l-5.500 1.200v10a2.800 2.300 0 11-2-2.200z" fill="#fff" />
          </svg>
        </TaskButton>
        <TaskButton className={"ml-[4px] mt-px w-[58px] " + open}>
          <svg width="30" height="30" viewBox="0 0 30 30">
            <circle cx="15" cy="15" r="15" fill="#8fbd08" />
            <path d="M5.500 10q10-3.500 20 1.500M6.500 15.500q9-3 17.500 1.500M7.500 20.500q8-2 14.500 1.500" fill="none" stroke="#111" strokeWidth="2.700" strokeLinecap="round" />
          </svg>
        </TaskButton>
        <TaskButton className="ml-[4px] mt-px w-[58px]">
          <svg width="30" height="16" viewBox="0 0 30 16">
            <path d="M0 1h16v13h-4V5h-2v9H6.500V5H4.500v9H1V4H0z" fill="#eceff2" />
            <path d="M17 1h3.500v9.500H22V3h8v11H17zM25.500 5.500v5.500h1.500V5.500z" fill="#eceff2" fillRule="evenodd" />
            <path d="M10.500 10l2.500 2.500-2.500 2.500zM18 0h2v3h-2zM22 2h3v1.500h-3z" fill="#46a8d8" />
          </svg>
        </TaskButton>
        <TaskButton className="ml-[4px] mt-px w-[58px]">
          <svg width="30" height="30" viewBox="0 0 30 30">
            <circle cx="15" cy="15" r="13" fill="#12a5e6" /><circle cx="9" cy="8.500" r="8.300" fill="#12a5e6" /><circle cx="21.500" cy="21.500" r="8.300" fill="#0c9be0" />
            <text x="14.800" y="22.500" textAnchor="middle" fontSize="22" fontWeight="bold" fill="#fff" stroke="#fff" strokeWidth=".8" fontFamily="Liberation Sans, sans-serif">S</text>
          </svg>
        </TaskButton>
        <TaskButton className="ml-[4px] mt-px w-[58px]">
          <svg width="30" height="30" viewBox="0 0 30 30">
            <rect width="30" height="30" fill="#078807" /><path d="M4 9l22-2-1 18.500L6 24z" fill="#fff" />
            <path d="M8 9q1-6 5-6t5 5M12 8q1-4 4-4t4 4" fill="none" stroke="#fff" strokeWidth="1.300" />
            <path d="M9 12.500l4-.4v4H9zM14 12l5-.5v4.600h-5zM9 17h4v4l-4-.4zM14 17h5v4.700l-5-.5z" fill="#078807" />
          </svg>
        </TaskButton>
        <TaskButton className="ml-[4px] mt-px w-[58px] border border-[#eef0f3] bg-[#7f8899]">
          <svg width="28" height="28" viewBox="0 0 28 28">
            <path d="M0 0h28v6H0z" fill="#8ac53f" /><path d="M0 8h9v20H0z" fill="#00a0df" /><path d="M11 8h17v20H11z" fill="#f01f86" />
            <path d="M0 8h9v5l-9 2z" fill="#3fb8e8" /><path d="M11 8h17v2l-17 4z" fill="#ff3d9c" />
          </svg>
        </TaskButton>
        <TaskButton className={"ml-[4px] mt-px w-[53px] " + open}>
          <svg width="29" height="25" viewBox="0 0 29 25">
            <path d="M0 1h8v6H0zM21 1h8v6h-8zM21 18h8v6h-8zM0 18h8v6H0z" fill="#4aa0ee" />
            <path d="M1.500 2.500h26v20h-26z" fill="#e6f3fb" /><path d="M3 4h23v8H3z" fill="#5fb0e8" /><path d="M3 8q5-3 9 0t14-2v6H3z" fill="#c4e3f6" />
            <path d="M3 12q6-2 11 1t12 1v2H3z" fill="#4a7a4a" /><path d="M3 15h23v6H3z" fill="#2b6a92" /><path d="M3 18q10-2 23 0v3H3z" fill="#4b90b0" />
          </svg>
        </TaskButton>
        <Stack className="mt-px w-[5px]" />
        <svg className="ml-auto block" width="136" height="40" viewBox="1380 860 136 40">
          <path d="M1382 883.500h7.500l-3.700-4z" fill="#fff" />
          <rect x="1402" y="873" width="16" height="16" fill="#f0a040" /><circle cx="1410" cy="880" r="6" fill="#f5cf8a" stroke="#4a2a10" />
          <path d="M1404 880h12M1410 874v12M1407 875q-2 5 0 10M1413 875q2 5 0 10" stroke="#4a2a10" fill="none" strokeWidth=".8" />
          <circle cx="1413" cy="884" r="4.800" fill="#e64a1c" /><path d="M1412.300 880.500h1.500v4h-1.500zM1412.300 885.500h1.500v1.500h-1.500z" fill="#fff" />
          <path d="M1427 874h1.500v14h-1.500zM1429 875q3-1 6 1.500t6 .5v5.500q-3 1-6-.5t-6-.5z" fill="#fff" />
          <path d="M1437 880l5.500 9h-11z" fill="#f6d01a" stroke="#b38d00" strokeWidth=".5" /><path d="M1436.300 883h1.400v3h-1.400zM1436.300 887h1.400v1h-1.400z" fill="#222" />
          <path d="M1457.700 876.700h6.600v11.600h-6.600z" fill="none" stroke="#fff" strokeWidth="1.400" /><path d="M1459 874h4v2h-4zM1459.500 882h3v5h-3z" fill="#fff" />
          <path d="M1475 885h2v2h-2zM1478 883h2v4h-2zM1481 881h2v6h-2zM1484 878h2v9h-2zM1487 876h2v11h-2z" fill="#fff" />
          <path d="M1501 878h2.500l4-4v14l-4-4h-2.500z" fill="#fff" /><path d="M1509.500 877q3 4 0 8.500" stroke="#fff" fill="none" />
        </svg>
        <div className="flex w-[84px] flex-col items-center pr-px pt-[4px] text-[12px] leading-[17px] text-white">
          <Fit w={48}>11:17 PM</Fit>
          <Fit w={52}>5/28/2015</Fit>
        </div>
      </div>
    </div>
  );
}

const menu = [["File", 18, "w-[30px]"], ["Edit", 20, "w-[32px]"], ["View", 25, "w-[37px]"], ["Project", 37, "w-[49px]"], ["Arrange", 43, "w-[54px]"], ["Publish", 39, "w-[51px]"], ["Team (PRO)", 64, "w-[76px]"], ["Help", 25, "w-[30px]"]];

export default function App() {
  return (
    <div className="flex h-[900px] w-[1600px] flex-col overflow-hidden bg-[#b9b9b9] font-['Open_Sans','Noto_Sans',sans-serif]">
      <svg className="absolute h-0 w-0"><defs><linearGradient id="gold" x1="0" y1="0" x2="0" y2="1"><stop offset="0" stopColor="#ffd21c" /><stop offset=".5" stopColor="#ffbe08" /><stop offset="1" stopColor="#fb9a10" /></linearGradient></defs></svg>
      <div className="flex h-[23px] shrink-0 items-start border-b border-[#2b5ba0] bg-[#396bb8]">
        <svg className="ml-[3px] mt-[4px] block" width="14" height="14" viewBox="0 0 14 14">
          <path d="M0 0h14v2.500H0z" fill="#8ac53f" /><path d="M0 4h4.500v10H0z" fill="#00a0df" /><path d="M0 4h4.500v4L0 9.500z" fill="#45bbea" /><path d="M6 4h8v10H6z" fill="#f01f86" />
        </svg>
        <div className="w-[985px] pl-[581px] pt-px text-[14.500px] leading-[22px] text-[#26303e]">
          <Fit w={403}>Achievements Page - Popup 1 - Axure RP Pro 7.0 : Unlicensed</Fit>
        </div>
        <svg className="ml-auto block" width="40" height="19" viewBox="1505 0 40 19">
          <path d="M1508 11h8v2h-8z" fill="#222" /><path d="M1533.500 6.500h7v7h-7zM1535.500 4.500h7v7.500" fill="none" stroke="#222" />
          <path d="M1533 6h8v2h-8z" fill="#222" />
        </svg>
        <div className="ml-[7px] mr-[3px] flex h-[19px] w-[45px] items-center justify-center bg-[#c75050]">
          <svg width="8" height="8" viewBox="0 0 8 8"><path d="M.7.7l6.600 6.600M7.300.7L.7 7.300" stroke="#fff" strokeWidth="1.800" /></svg>
        </div>
      </div>
      <div className="flex h-[22px] shrink-0 items-center pl-[6px] text-[12px] text-[#111]">
        {menu.map(([t, w, c]) => <div key={t} className={c}><Fit w={w}>{t}</Fit></div>)}
      </div>
      <div className="h-[57px] shrink-0">
        <ToolbarRow1 />
        <ToolbarRow2 />
      </div>
      <div className="flex h-[758px] shrink-0">
        <WidgetPanel />
        <div className="w-[5px] shrink-0 bg-[#b9b9b9] pt-[329px]">
          <div className="flex h-[100px] items-center bg-[#777]">
            <svg width="5" height="6" viewBox="0 0 5 6"><path d="M4 0v6L1 3z" fill="#eee" /></svg>
          </div>
        </div>
        <div className="flex flex-1 flex-col">
          <div className="flex h-[17px] shrink-0 items-stretch">
            <div className="flex w-[21px] items-center bg-[#d3d3d3] pl-[2px]">
              <svg width="16" height="11" viewBox="0 0 16 11"><path d="M0 3h5v6H0zM13 5h3v5h-3z" fill={GRAY} /><path d="M4 0h10v7h-3v1.500h1V10H6V8.500h1V7H4z" fill={BLUE} /></svg>
            </div>
            <div className="flex w-[64px] items-center bg-white pl-[7px] text-[12px] font-bold leading-none text-[#222]">
              <Fit w={33}>Home</Fit>
              <svg className="ml-[9px]" width="7" height="7" viewBox="0 0 7 7"><path d="M.5.5l6 6M6.500.500l-6 6" stroke="#b9b9b9" strokeWidth="1.800" /></svg>
            </div>
            <svg className="ml-auto mr-[5px] mt-[7px] block" width="9" height="5" viewBox="0 0 9 5"><path d="M0 0h9L4.500 5z" fill="#6e6e6e" /></svg>
          </div>
          <div className="flex shrink-0">
            <div className="h-[15px] w-[15px] bg-white" />
            <HRuler />
          </div>
          <div className="flex h-[726px]">
            <VRuler />
            <div className="flex w-[1313px] flex-col">
              <Canvas />
              <div className="flex h-[17px] items-center bg-[#ececec]">
                <svg width="17" height="17" viewBox="0 0 17 17"><path d="M10 5.500v6L6.500 8.500z" fill="#777" /></svg>
                <div className="flex h-[15px] w-[83px] items-center justify-center rounded-[2px] border border-[#999] bg-linear-to-b from-[#f3f3f3] via-[#dedede] to-[#c9c9cc]">
                  <svg width="9" height="7" viewBox="0 0 9 7"><path d="M1.500 0v7M4.500 0v7M7.500 0v7" stroke="#666" strokeWidth="1.300" /></svg>
                </div>
                <svg className="ml-auto" width="17" height="17" viewBox="0 0 17 17"><path d="M7 5.500v6l3.500-3z" fill="#666" /></svg>
              </div>
            </div>
            <div className="flex w-[17px] flex-col items-center bg-[#ececec]">
              <svg width="17" height="17" viewBox="0 0 17 17"><path d="M5 10h6L8 6.500z" fill="#777" /></svg>
              <div className="flex h-[23px] w-[15px] items-center justify-center rounded-[2px] border border-[#999] bg-linear-to-r from-[#f6f6f6] to-[#c9c9cc]">
                <svg width="8" height="10" viewBox="0 0 8 10"><path d="M0 1.500h7M0 4.500h7M0 7.500h7" stroke="#444" strokeWidth="1.300" /></svg>
              </div>
              <svg className="mb-[17px] mt-auto" width="17" height="17" viewBox="0 0 17 17"><path d="M5 6h6l-3 3.500z" fill="#666" /></svg>
            </div>
          </div>
        </div>
      </div>
      <Taskbar />
    </div>
  );
}
